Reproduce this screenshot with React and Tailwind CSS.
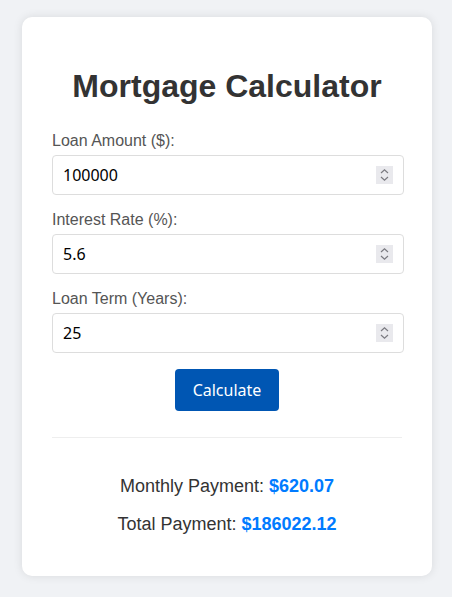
import React, { useState } from 'react'

const Spinner = () => (
  <span className="pointer-events-none absolute right-[11px] top-1/2 -translate-y-1/2 w-[17px] h-[18px] bg-[#e9e9ed] flex items-center justify-center">
    <svg width="9" height="14" viewBox="0 0 9 14" fill="none" stroke="#7a7a80" strokeWidth="1.2">
      <path d="M1 5 L4.5 1.8 L8 5" />
      <path d="M1 9 L4.5 12.2 L8 9" />
    </svg>
  </span>
)

const Field = ({ label, value, onChange }) => (
  <div>
    <label className="block text-[16px] leading-[18px] text-[#555] mb-[5px]">{label}</label>
    <div className="relative mb-[16px] w-[352px]">
      <input
        type="text"
        value={value}
        onChange={(e) => onChange(e.target.value)}
        className="w-full h-[40px] border border-[#ddd] rounded-[4px] pl-[10px] text-[16px] text-black outline-none"
        style={{ fontFamily: '"Noto Sans", sans-serif' }}
      />
      <Spinner />
    </div>
  </div>
)

export default function App() {
  const [amount, setAmount] = useState('100000')
  const [rate, setRate] = useState('5.6')
  const [term, setTerm] = useState('25')

  return (
    <div className="min-h-[597px] bg-[#f0f2f5] pt-[17px]" style={{ fontFamily: '"Liberation Sans", Arial, sans-serif' }}>
      <div className="ml-[22px] w-[410px] bg-white rounded-[10px] shadow-[0_0_10px_rgba(0,0,0,0.1)] p-[30px]">
        <h1 className="text-[32px] leading-[37px] font-bold text-[#333] text-center mt-[21px] mb-[27px]">
          Mortgage Calculator
        </h1>

        <Field label="Loan Amount ($):" value={amount} onChange={setAmount} />
        <Field label="Interest Rate (%):" value={rate} onChange={setRate} />
        <Field label="Loan Term (Years):" value={term} onChange={setTerm} />

        <div className="flex justify-center">
          <button
            className="w-[104px] h-[42px] bg-[#0056b3] text-white text-[16px] rounded-[4px]"
            style={{ fontFamily: '"Noto Sans", sans-serif' }}
          >
            Calculate
          </button>
        </div>

        <hr className="mt-[26px] border-0 border-t border-[#eee]" />

        <div className="text-center text-[18px] leading-[21px] text-[#333]">
          <p className="mt-[38px]">
            Monthly Payment: <span className="font-bold text-[#007bff]">$620.07</span>
          </p>
          <p className="mt-[17px] mb-[11px]">
            Total Payment: <span className="font-bold text-[#007bff]">$186022.12</span>
          </p>
        </div>
      </div>
    </div>
  )
}
